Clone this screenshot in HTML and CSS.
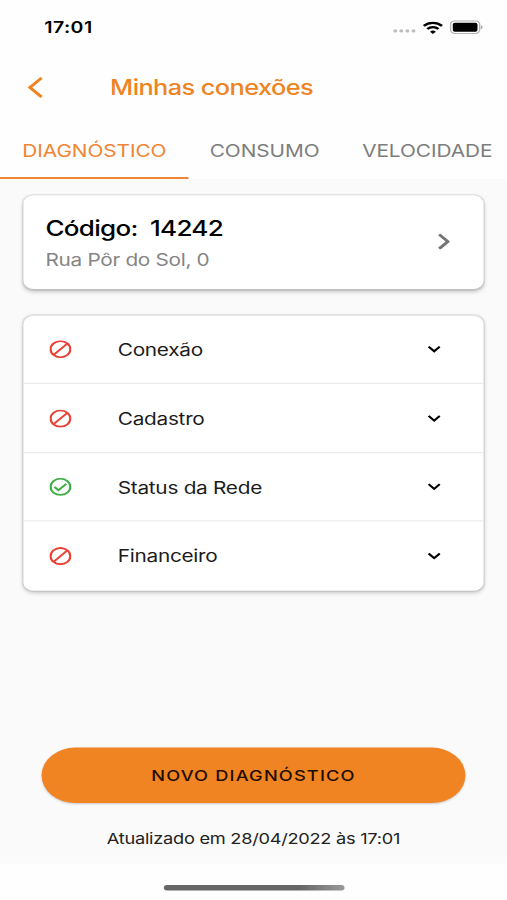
FILE: index.html
```html
<!DOCTYPE html>
<html lang="pt-BR">
<head>
    <meta charset="utf-8">
    <meta name="viewport" content="width=device-width, initial-scale=1">
    <title>Minhas conexões</title>
    <link rel="stylesheet" href="styles.css">
</head>

<body>
    <div class="screen">
        <div class="status-bar">
            <span class="time">17:01</span>
            <div class="status-icons">
                <svg class="signal" viewBox="0 0 18 4" fill="#bdbdbd">
                    <circle cx="2" cy="2" r="1.5"/>
                    <circle cx="6.7" cy="2" r="1.5"/>
                    <circle cx="11.4" cy="2" r="1.5"/>
                    <circle cx="16.1" cy="2" r="1.5"/>
                </svg>
                <svg class="wifi" viewBox="0 0 16 12" fill="none" stroke="#000" stroke-width="2.1">
                    <path d="M1 4.3a10 10 0 0 1 14 0"/>
                    <path d="M3.7 7.2a6.1 6.1 0 0 1 8.6 0"/>
                    <path d="M8 11.8 5.8 9.7a3.2 3.2 0 0 1 4.4 0z" fill="#000" stroke="none"/>
                </svg>
                <svg class="battery" viewBox="0 0 26 13">
                    <rect x=".6" y=".6" width="22.4" height="11.8" rx="3.4" fill="#fff" stroke="#b5b5b5" stroke-width="1.1"/>
                    <rect x="2.3" y="2.3" width="19" height="8.4" rx="1.6"/>
                    <path d="M24.1 4.6c1.4.6 1.4 3.2 0 3.8z" fill="#999"/>
                </svg>
            </div>
        </div>

        <header class="header">
            <svg class="back" viewBox="0 0 12 20" fill="none" stroke="#ee8322" stroke-width="2.5">
                <path d="M11 1 2 10l9 9"/>
            </svg>
            <h1>Minhas conexões</h1>
        </header>

        <nav class="tabs">
            <a class="tab active">DIAGNÓSTICO</a>
            <a class="tab">CONSUMO</a>
            <a class="tab">VELOCIDADE</a>
        </nav>

        <main class="content">
            <section class="card address">
                <div>
                    <h2>Código:&nbsp; 14242</h2>
                    <p>Rua Pôr do Sol, 0</p>
                </div>
                <svg class="next" viewBox="0 0 9 15" fill="none" stroke="#757575" stroke-width="2.5">
                    <path d="M.8.8l6.7 6.7-6.7 6.7"/>
                </svg>
            </section>

            <section class="card list">
                <div class="row">
                    <svg class="state blocked" viewBox="0 0 17 17"><circle cx="8.5" cy="8.5" r="7.6"/><path d="M3.2 13.8 13.8 3.2"/></svg>
                    <span>Conexão</span>
                    <svg class="arrow" viewBox="0 0 10 7"><path d="M.7 1 5 5.4 9.3 1"/></svg>
                </div>
                <div class="row">
                    <svg class="state blocked" viewBox="0 0 17 17"><circle cx="8.5" cy="8.5" r="7.6"/><path d="M3.2 13.8 13.8 3.2"/></svg>
                    <span>Cadastro</span>
                    <svg class="arrow" viewBox="0 0 10 7"><path d="M.7 1 5 5.4 9.3 1"/></svg>
                </div>
                <div class="row">
                    <svg class="state ok" viewBox="0 0 17 17"><circle cx="8.5" cy="8.5" r="7.6"/><path d="M3.9 8.7 7 11.7l6-6"/></svg>
                    <span>Status da Rede</span>
                    <svg class="arrow" viewBox="0 0 10 7"><path d="M.7 1 5 5.4 9.3 1"/></svg>
                </div>
                <div class="row">
                    <svg class="state blocked" viewBox="0 0 17 17"><circle cx="8.5" cy="8.5" r="7.6"/><path d="M3.2 13.8 13.8 3.2"/></svg>
                    <span>Financeiro</span>
                    <svg class="arrow" viewBox="0 0 10 7"><path d="M.7 1 5 5.4 9.3 1"/></svg>
                </div>
            </section>

            <button class="new-btn">NOVO DIAGNÓSTICO</button>
            <p class="updated">Atualizado em 28/04/2022 às 17:01</p>
        </main>

        <div class="home-area">
            <div class="home-bar"></div>
        </div>
    </div>
</body>
</html>
```
FILE: styles.css
```css
* {
    box-sizing: border-box;
}

body {
    margin: 0;
    width: 507px;
    height: 900px;
    overflow: hidden;
    background: #fefefe;
    font-family: Inter, "Liberation Sans", sans-serif;
}

h1, h2, p {
    margin: 0;
    white-space: nowrap;
}

svg {
    display: block;
    flex-shrink: 0;
}

/* 390x844 phone screen stretched over the window */
.screen {
    display: flex;
    flex-direction: column;
    width: 390px;
    height: 844px;
    overflow: hidden;
    transform: scale(1.3, 1.0664);
    transform-origin: 0 0;
}

.status-bar {
    display: flex;
    justify-content: space-between;
    align-items: center;
    height: 51px;
    padding: 0 18px 0 34px;
}

.time {
    font-size: 15px;
    font-weight: 600;
    letter-spacing: 0.35px;
}

.status-icons {
    display: flex;
    align-items: center;
}

.signal {
    width: 18px;
    height: 4px;
    margin: 7px 5px 0 0;
}

.wifi {
    width: 16px;
    height: 12px;
    margin-right: 5px;
}

.battery {
    width: 26px;
    height: 13px;
}

.header {
    display: flex;
    align-items: center;
    height: 62px;
    padding-left: 21px;
    color: #ee8322;
}

.back {
    width: 12px;
    height: 20px;
}

.header h1 {
    margin-left: 51.7px;
    font-size: 19.5px;
    font-weight: 500;
    letter-spacing: -0.45px;
}

.tabs {
    display: flex;
    height: 55px;
}

.tab {
    flex-shrink: 0;
    padding: 18px 16.4px 0;
    border-bottom: 2px solid transparent;
    color: #7d7d7d;
    font-size: 16px;
    line-height: 20px;
    letter-spacing: -0.05px;
}

.tab.active {
    padding: 18px 16.9px 0 17.2px;
    color: #ee8434;
    border-color: #ee8434;
}

.content {
    display: flex;
    flex-direction: column;
    height: 642px;
    padding: 15px 18px 0;
    background: #fafafa;
}

.card {
    background: #fff;
    border-radius: 8px;
    box-shadow: 0 0 1px 1px rgba(0, 0, 0, 0.08), 0 2px 4px rgba(0, 0, 0, 0.2);
}

.address {
    display: flex;
    justify-content: space-between;
    align-items: center;
    height: 88px;
    padding: 4px 26px 0 17px;
}

.address h2 {
    font-size: 20px;
    font-weight: 500;
    line-height: 28px;
    letter-spacing: -0.55px;
}

.address p {
    color: #858585;
    font-size: 16px;
    line-height: 30px;
    letter-spacing: -0.25px;
}

.next {
    width: 9px;
    height: 15px;
    margin-top: -5px;
}

.list {
    margin-top: 25px;
}

.row {
    display: flex;
    align-items: center;
    height: 64.4px;
    padding: 0 33px 0 20px;
    border-bottom: 1px solid #e8e8e8;
    color: #1c1c1c;
    font-size: 16px;
    letter-spacing: -0.22px;
}

.row:last-child {
    border-bottom: none;
}

.row span {
    flex: 1;
    margin-left: 35.6px;
    padding-top: 1px;
}

.row:last-child span {
    padding-top: 0;
}

.state {
    width: 17px;
    height: 17px;
    fill: none;
    stroke-width: 1.7;
}

.blocked {
    stroke: #e94235;
}

.ok {
    stroke: #3fad46;
}

.arrow {
    width: 10px;
    height: 7px;
    fill: none;
    stroke: #000;
    stroke-width: 1.8;
}

.new-btn {
    height: 52px;
    margin: 147px 14px 0;
    border: none;
    border-radius: 26px;
    background: #f08322;
    box-shadow: 0 1px 2px rgba(0, 0, 0, 0.2);
    color: #1f0d00;
    font-family: inherit;
    font-size: 14px;
    font-weight: 500;
    letter-spacing: 0.9px;
}

.updated {
    margin-top: 23px;
    color: #222;
    font-size: 14px;
    line-height: 20px;
    letter-spacing: -0.2px;
    text-align: center;
}

.home-area {
    display: flex;
    justify-content: center;
    flex: 1;
    padding-top: 20px;
}

.home-bar {
    width: 139px;
    height: 5px;
    border-radius: 3px;
    background: linear-gradient(90deg, #666 75%, #999);
}
```
